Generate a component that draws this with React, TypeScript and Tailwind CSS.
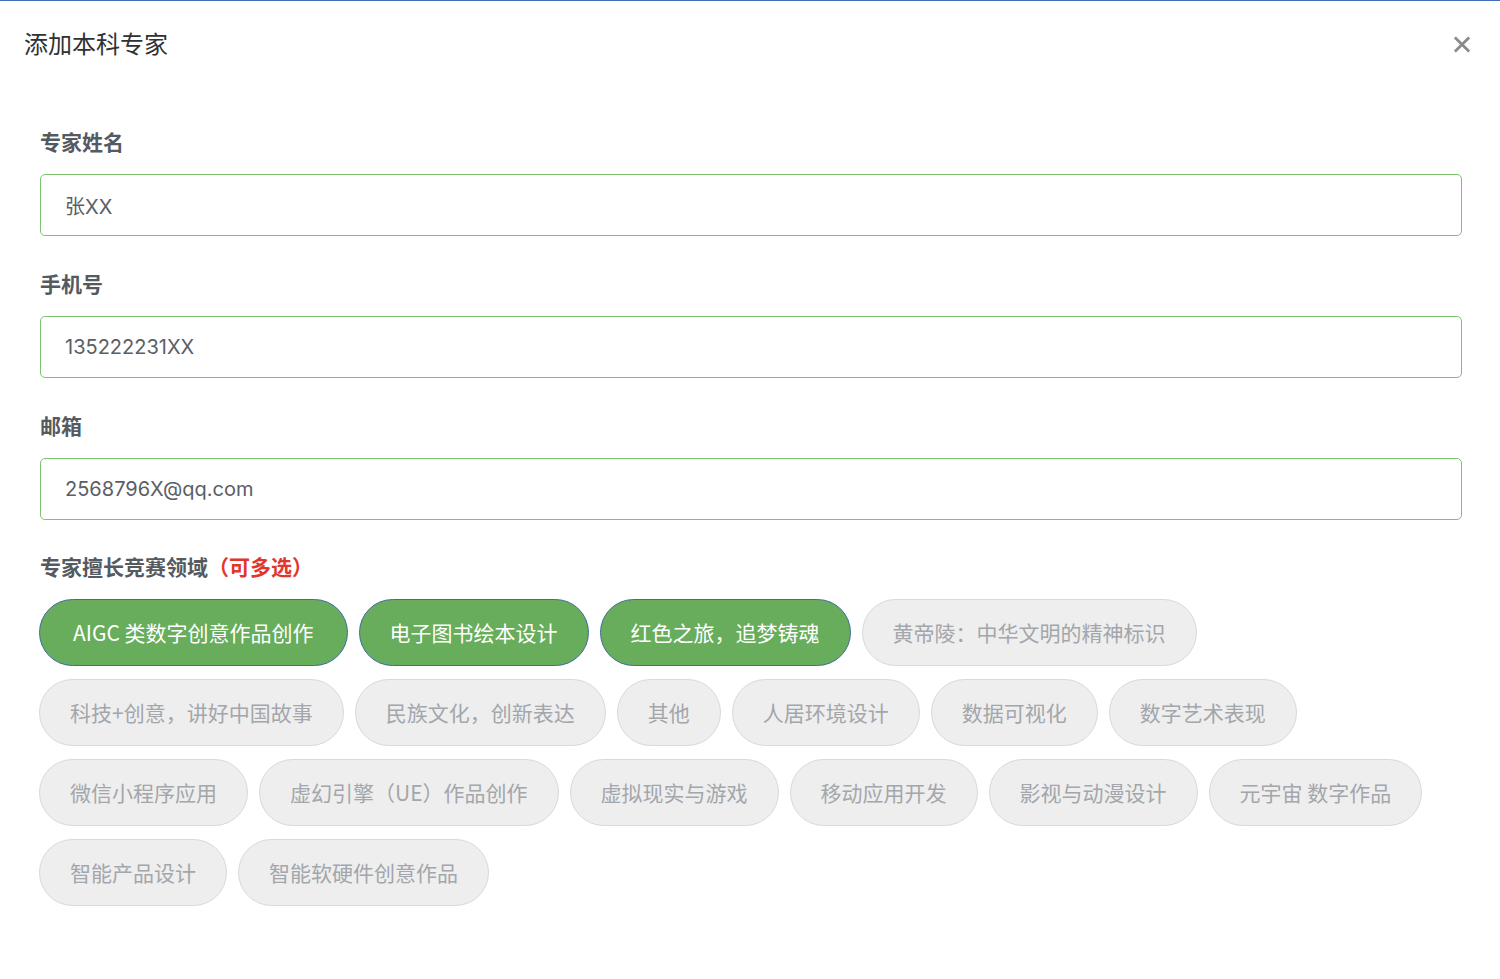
import React, { useState } from "react";

const FONT = {
  fontFamily: '"Noto Sans CJK SC", "Noto Sans", sans-serif',
};
const INPUT_FONT = {
  fontFamily: 'Inter, "Noto Sans CJK SC", sans-serif',
};

const fields = [
  { label: "专家姓名", value: "张XX" },
  { label: "手机号", value: "135222231XX" },
  { label: "邮箱", value: "2568796X@qq.com" },
];

const rows: string[][] = [
  ["AIGC 类数字创意作品创作", "电子图书绘本设计", "红色之旅，追梦铸魂", "黄帝陵：中华文明的精神标识"],
  ["科技+创意，讲好中国故事", "民族文化，创新表达", "其他", "人居环境设计", "数据可视化", "数字艺术表现"],
  ["微信小程序应用", "虚幻引擎（UE）作品创作", "虚拟现实与游戏", "移动应用开发", "影视与动漫设计", "元宇宙 数字作品"],
  ["智能产品设计", "智能软硬件创意作品"],
];

export default function App() {
  const [selected, setSelected] = useState<string[]>([
    "AIGC 类数字创意作品创作",
    "电子图书绘本设计",
    "红色之旅，追梦铸魂",
  ]);

  const toggle = (t: string) =>
    setSelected((s) => (s.includes(t) ? s.filter((x) => x !== t) : [...s, t]));

  return (
    <div className="w-[1500px] h-[979px] bg-white overflow-hidden flex flex-col" style={FONT}>
      <div className="h-px bg-[#3f6fb8] shrink-0" />
      <div className="flex-1 bg-white rounded-tl-[6px] rounded-tr-[6px]">
        {/* header */}
        <div className="flex items-center justify-between pl-6 pr-[30px] pt-[23px] h-[60px]">
          <h1 className="text-[24px] leading-[36px] text-[#303133] font-normal">添加本科专家</h1>
          <button className="w-4 h-4 mt-[4px] flex items-center justify-center">
            <svg width="17" height="17" viewBox="0 0 17 17">
              <path d="M2 2 L15 15 M15 2 L2 15" stroke="#8a8a8a" strokeWidth="3" strokeLinecap="square" />
            </svg>
          </button>
        </div>

        {/* body */}
        <div className="pl-10 pr-[38px] pt-[65px]">
          {fields.map((f, i) => (
            <div key={f.label} className={i > 0 ? "mt-[32px]" : ""}>
              <div className="text-[21px] leading-[31px] font-bold text-[#555a60] mb-[17px]">{f.label}</div>
              <input
                defaultValue={f.value}
                className="w-full h-[62px] border border-[#7cc36d] rounded-[5px] px-6 text-[20px] text-[#5a5e66] outline-none"
                style={INPUT_FONT}
              />
            </div>
          ))}

          <div className="mt-[31px]">
            <div className="text-[21px] leading-[31px] font-bold text-[#555a60] mb-[17px]">
              专家擅长竞赛领域<span className="text-[#e2362b]">（可多选）</span>
            </div>
            <div className="flex flex-col gap-[13px] -ml-px">
              {rows.map((row, ri) => (
                <div key={ri} className="flex gap-[11px]">
                  {row.map((t, ti) => {
                    const on = selected.includes(t);
                    const pad = ri === 0 && ti === 0 ? "px-[33px]" : "px-[30px]";
                    return (
                      <button
                        key={t}
                        onClick={() => toggle(t)}
                        className={
                          on
                            ? `h-[67px] ${pad} rounded-full border border-[#3d6e9e] bg-[#67ad5b] text-white text-[21px] whitespace-nowrap`
                            : `h-[67px] ${pad} rounded-full border border-[#d9d9d9] bg-[#eeeeee] text-[#a3a6ab] text-[21px] whitespace-nowrap`
                        }
                        style={FONT}
                      >
                        {t}
                      </button>
                    );
                  })}
                </div>
              ))}
            </div>
          </div>
        </div>
      </div>
    </div>
  );
}
